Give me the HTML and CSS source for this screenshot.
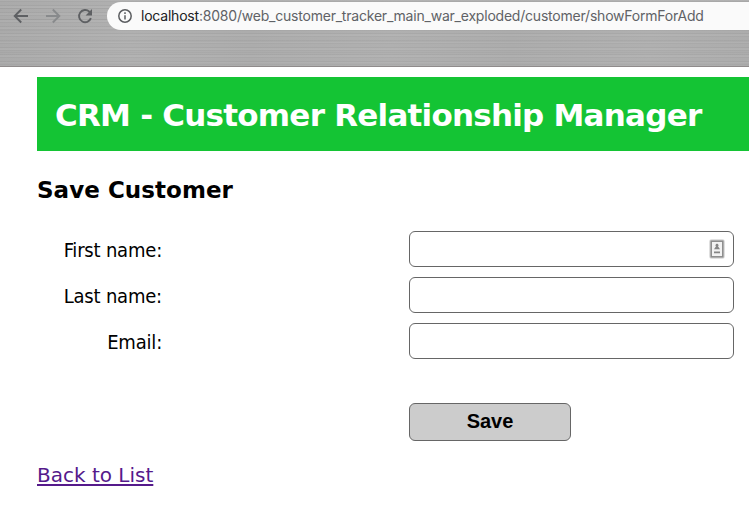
FILE: index.html
```html
<!DOCTYPE html>
<html lang="en">
<head>
<meta charset="utf-8">
<title>Save Customer</title>
<link rel="stylesheet" href="styles.css">
</head>
<body>
<header class="browser">
  <nav class="controls">
    <svg class="icon" viewBox="0 0 16 16"><path d="M15 8H2M8.2 1.5 1.7 8l6.5 6.5"/></svg>
    <svg class="icon faded" viewBox="0 0 16 16"><path d="M1 8h13M7.8 1.5 14.3 8l-6.5 6.5"/></svg>
    <svg class="icon" viewBox="0 0 16 16"><path d="M13.9 10.2A6.1 6.1 0 1 1 12.4 3.7L14 5.3"/><path class="solid" d="M15 1v6.4H8.6z"/></svg>
  </nav>
  <div class="address">
    <svg class="info" viewBox="0 0 14 14"><circle cx="7" cy="7" r="6.2"/><path d="M7 6.2v4.3M7 3.3v1.6"/></svg>
    <span class="url"><b>localhost</b>:8080/web_customer_tracker_main_war_exploded/customer/showFormForAdd</span>
  </div>
</header>
<main class="page">
  <div class="banner"><h1>CRM - Customer Relationship Manager</h1></div>
  <h2>Save Customer</h2>
  <form class="form">
    <label for="first">First name:</label>
    <div class="field"><input id="first" type="text">
      <svg class="contact" viewBox="0 0 16 20"><rect class="halo" x="1.5" y="1.5" width="13" height="17" rx="1"/><rect class="frame" x="2.2" y="2.2" width="11.6" height="15.6"/><circle cx="8" cy="6.2" r="1.4"/><path d="M7.2 7h1.6l2.2 3.2H5zM5 12.5h6v1.8H5z"/></svg>
    </div>
    <label for="last">Last name:</label>
    <div class="field"><input id="last" type="text"></div>
    <label for="email">Email:</label>
    <div class="field"><input id="email" type="text"></div>
    <button class="save" type="button">Save</button>
  </form>
  <a class="back" href="#">Back to List</a>
</main>
</body>
</html>
```
FILE: styles.css
```css
* { box-sizing: border-box; }
body { margin: 0; background: #fff; color: #000; font-family: "DejaVu Sans", Verdana, sans-serif; overflow: hidden; }
.browser {
  display: flex; align-items: flex-start; height: 67px; padding-top: 2px;
  border-bottom: 1px solid #8f8b8b;
  background:
    repeating-linear-gradient(180deg, rgba(255,255,255,.05) 0 1px, rgba(0,0,0,.03) 1px 2px, transparent 2px 5px, rgba(0,0,0,.04) 5px 6px, rgba(255,255,255,.04) 6px 7px),
    repeating-linear-gradient(180deg, transparent 0 8px, rgba(0,0,0,.03) 8px 9px, transparent 9px 11px),
    linear-gradient(90deg, #aaa 0, #b0b0b0 130px, #acacac 250px, #b0b0b0 390px, #acacac 510px, #b0b0b0 650px, #acacac 749px);
}
.controls { display: flex; gap: 16px; width: 107px; padding: 6px 0 0 13px; }
.icon { width: 16px; height: 16px; fill: none; stroke: #5e6063; stroke-width: 1.9; }
.icon.faded { stroke: #888a8c; }
.icon .solid { fill: #5e6063; stroke: none; }
.address { flex: 1; display: flex; align-items: center; height: 28px; padding-left: 11px; background: #fafafa; border-radius: 14px 0 0 14px; }
.info { width: 14px; height: 14px; margin-right: 9px; fill: none; stroke: #5b5d60; stroke-width: 1.5; }
.url { font: 14px/28px Inter, sans-serif; letter-spacing: -.212px; color: #606266; white-space: nowrap; }
.url b { font-weight: 400; color: #202124; }
.page { padding: 10px 0 0 37px; }
.banner { height: 74px; padding-left: 18px; background: #14c434; color: #fff; }
h1 { margin: 0; font-size: 31px; line-height: 76px; letter-spacing: -.77px; white-space: nowrap; }
h2 { margin: 24px 0 25px; font-size: 23px; line-height: 31px; letter-spacing: .05px; }
.form { display: grid; grid-template-columns: 125px 325px; column-gap: 247px; row-gap: 10px; }
label { height: 36px; font: 20px/39px "DejaVu Sans Condensed", "DejaVu Sans", sans-serif; font-stretch: condensed; text-align: right; white-space: nowrap; letter-spacing: -.2px; }
.field { position: relative; height: 36px; }
input { display: block; width: 325px; height: 36px; border: 1px solid #666; border-radius: 6px; background: #fff; }
.contact { position: absolute; right: 9px; top: 8px; width: 16px; height: 20px; fill: #858585; }
.contact .halo { fill: #f2f2f2; stroke: #d8d8d8; stroke-width: 2.6; }
.contact .frame { fill: none; stroke: #8b8b8b; stroke-width: 1.5; }
.save { grid-column: 2; width: 162px; height: 38px; margin-top: 34px; padding: 0 0 2px; border: 1px solid #666; border-radius: 6px; background: #ccc; color: #000; font: bold 20px/34px "Liberation Sans", Arial, sans-serif; }
.back { display: inline-block; margin-top: 21px; font-size: 20px; line-height: 26px; color: #551a8b; text-decoration-thickness: 2px; text-underline-offset: 2px; }
```
